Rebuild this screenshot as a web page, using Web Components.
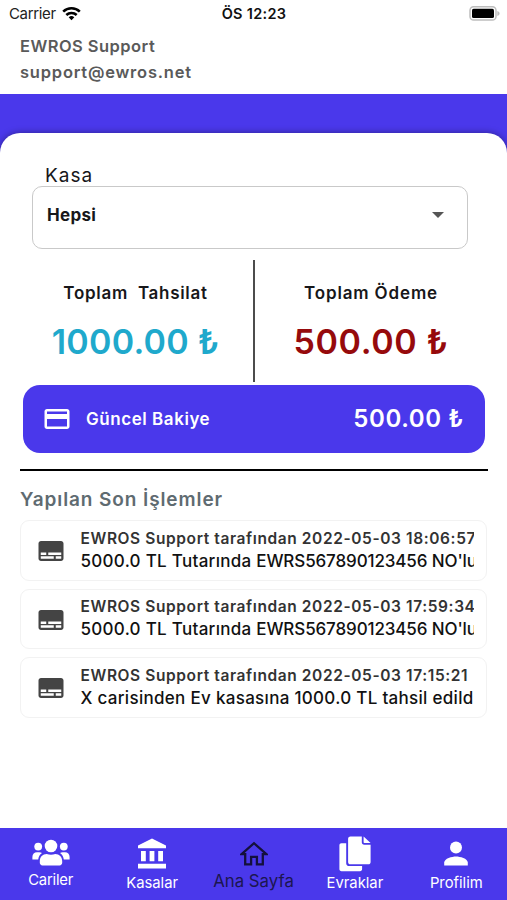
<!DOCTYPE html>
<html lang="tr">
<head>
<meta charset="utf-8">
<title>EWROS</title>
<style>
html, body {
    margin: 0;
    height: 100%;
}

body {
    font-family: Inter, "Noto Sans", sans-serif;
    color: #17171a;
    background-color: white;
    overflow: hidden;
}
</style>
</head>
<body>
<home-page></home-page>

<script>
function define(name, html) {
    const template = document.createElement('template');
    template.innerHTML = html;

    window.customElements.define(name, class extends HTMLElement {
        constructor() {
            super();
            this.attachShadow({mode: 'open'});
            this.shadowRoot.appendChild(template.content.cloneNode(true));
        }
    });
}

define('status-bar', `
<style>
:host {
    display: grid;
    grid-template-columns: 1fr auto 1fr;
    align-items: center;
    height: 28px;
    padding: 0 7px 0 9px;
    font-size: 15px;
    line-height: 28px;
    color: #222;
}

.carrier {
    display: flex;
    align-items: center;
    gap: 6px;
    letter-spacing: -0.35px;
}

.time {
    font-weight: 600;
    font-size: 14.5px;
    letter-spacing: 0.3px;
    margin-left: -1px;
    color: #111;
}

.battery {
    justify-self: end;
}

svg {
    display: block;
    margin-top: -2px;
}
</style>
<div class="carrier">
    <span>Carrier</span>
    <svg width="19" height="15" viewBox="0 0 19 15" fill="none" stroke="#000" stroke-width="2.6">
        <path d="M1.2 5.6a12 12 0 0 1 16.6 0"/>
        <path d="M4.3 9a7.6 7.6 0 0 1 10.4 0"/>
        <path d="M9.5 14.2l-2.8-3a4.2 4.2 0 0 1 5.6 0z" fill="#000" stroke="none"/>
    </svg>
</div>
<span class="time">ÖS 12:23</span>
<svg class="battery" width="31" height="15" viewBox="0 0 31 15">
    <rect x="1" y=".8" width="26" height="13.2" rx="3.6" fill="#fff" stroke="#bdbdbd" stroke-width="1.5"/>
    <rect x="3" y="2.8" width="22" height="9.2" rx="1.6" fill="#000"/>
    <path d="M28.3 5v5c1.5-.4 2.3-1.3 2.3-2.5S29.8 5.4 28.3 5z" fill="#bdbdbd"/>
</svg>
`);

define('user-header', `
<style>
:host {
    display: flex;
    flex-direction: column;
    padding: 5px 0 9px 20px;
    font-size: 16.5px;
    font-weight: 600;
    line-height: 26px;
    color: #5a5a5a;
}

.name {
    letter-spacing: 0.45px;
}

.mail {
    letter-spacing: 0.78px;
}
</style>
<div class="name"><slot name="name"></slot></div>
<div class="mail"><slot name="mail"></slot></div>
`);

define('select-box', `
<style>
:host {
    display: block;
    margin: 0 39px 0 32px;
}

.label {
    padding: 1px 0 0 13px;
    margin-bottom: -1px;
    font-size: 19px;
    line-height: 22px;
    letter-spacing: 1px;
}

.box {
    box-sizing: border-box;
    height: 63px;
    display: flex;
    align-items: center;
    justify-content: space-between;
    border: 1.5px solid #c9c9c9;
    border-radius: 10px;
    padding: 0 23px 6px 14px;
    font-size: 17px;
    font-weight: 700;
    letter-spacing: 0.3px;
}
</style>
<div class="label"><slot name="label"></slot></div>
<div class="box">
    <slot></slot>
    <svg width="12" height="6" viewBox="0 0 12 6"><path d="M0 0h12L6 6z" fill="#555"/></svg>
</div>
`);

define('total-cell', `
<style>
:host {
    display: flex;
    flex-direction: column;
    align-items: center;
    padding-top: 21px;
    white-space: pre;
}

.title {
    font-size: 17px;
    font-weight: 600;
    line-height: 24px;
    letter-spacing: var(--title-spacing, 0.6px);
}

.amount {
    margin-top: 15px;
    font-size: 34px;
    font-weight: 600;
    line-height: 43px;
    letter-spacing: var(--amount-spacing, 0.3px);
    color: var(--amount-color);
}
</style>
<span class="title"><slot name="title"></slot></span>
<span class="amount"><slot></slot></span>
`);

define('balance-card', `
<style>
:host {
    display: flex;
    align-items: center;
    height: 68px;
    box-sizing: border-box;
    margin: 0 22px 0 23px;
    padding: 0 21px 0 19px;
    border-radius: 17px;
    background-color: #4a38eb;
    color: white;
    font-weight: 600;
}

svg {
    flex: none;
}

.title {
    flex: 1;
    margin-left: 14px;
    font-size: 17px;
    letter-spacing: 0.55px;
}

.amount {
    font-size: 24px;
    letter-spacing: 0.6px;
    margin-top: -1px;
}
</style>
<svg width="30" height="30" viewBox="0 0 24 24" fill="#fff"><path d="M20 4H4c-1.11 0-1.99.89-1.99 2L2 18c0 1.11.89 2 2 2h16c1.11 0 2-.89 2-2V6c0-1.11-.89-2-2-2zm0 14H4v-6h16v6zm0-10H4V6h16v2z"/></svg>
<span class="title"><slot name="title"></slot></span>
<span class="amount"><slot></slot></span>
`);

define('activity-row', `
<style>
:host {
    display: flex;
    align-items: center;
    height: 60.5px;
    box-sizing: border-box;
    border: 1.5px solid #f2f2f2;
    border-radius: 9px;
    padding: 0 12px 0 15px;
}

svg {
    flex: none;
    margin-top: 2px;
}

.lines {
    flex: 1;
    min-width: 0;
    margin-left: 14.5px;
    margin-top: -1px;
}

.lines div {
    white-space: nowrap;
    overflow: hidden;
    line-height: 23px;
}

.meta {
    font-size: 15.5px;
    font-weight: 600;
    letter-spacing: 0.6px;
    color: #333;
}

.text {
    font-size: 17px;
    font-weight: 500;
    letter-spacing: var(--text-spacing, -0.12px);
    color: #111;
}
</style>
<svg width="30" height="30" viewBox="0 0 24 24" fill="#444"><path d="M20 4H4c-1.1 0-2 .9-2 2v12c0 1.1.9 2 2 2h16c1.1 0 2-.9 2-2V6c0-1.1-.9-2-2-2zM3.8 13.2h4.4v2H3.8zm10.4 4.9H3.8v-2h10.4zm6 0h-4.4v-2h4.4zm0-2.9H9.8v-2h10.4z"/></svg>
<div class="lines">
    <div class="meta"><slot name="meta"></slot></div>
    <div class="text"><slot></slot></div>
</div>
`);

define('nav-item', `
<style>
:host {
    flex: 1;
    display: flex;
    flex-direction: column;
    align-items: center;
    color: white;
    font-size: 14.8px;
    line-height: 20px;
}

:host([active]) {
    color: #1c1650;
    font-size: 16.8px;
}

.icon {
    height: var(--icon-height, 44.5px);
    display: flex;
    align-items: center;
    padding-top: var(--icon-top, 0);
    box-sizing: border-box;
}

::slotted(svg) {
    display: block;
}
</style>
<div class="icon"><slot name="icon"></slot></div>
<span><slot></slot></span>
`);

define('nav-bar', `
<style>
:host {
    display: flex;
    height: 72px;
    background-color: #4a38eb;
}
</style>
<slot></slot>
`);

define('home-page', `
<style>
:host {
    display: flex;
    flex-direction: column;
    height: 900px;
}

.stage {
    flex: 1;
    display: flex;
    padding-top: 39px;
    background: linear-gradient(#4a38eb 100px, white 100px);
}

.sheet {
    flex: 1;
    min-width: 0;
    box-sizing: border-box;
    padding-top: 31px;
    border-radius: 20px 20px 0 0;
    background-color: white;
    box-shadow: 0 0 7px rgba(0, 0, 0, 0.4);
    clip-path: inset(-20px 0 0 0);
}

.totals {
    display: grid;
    grid-template-columns: 1fr 2px 1fr;
    height: 122px;
    margin: 11px 18px 3px 19px;
}

.divider {
    background-color: #4c4c4c;
}

.income {
    --title-spacing: 0.7px;
    --amount-spacing: 0.25px;
    --amount-color: #1fa9cc;
    margin-right: 1px;
}

.expense {
    --title-spacing: 0.85px;
    --amount-spacing: 0.6px;
    --amount-color: #960a0c;
    margin-left: -2px;
}

.rule {
    height: 2.5px;
    margin: 15.5px 19px 0 20px;
    background-color: #000;
}

h2 {
    margin: 17px 0 9px 20px;
    font-size: 19px;
    font-weight: 600;
    line-height: 23px;
    letter-spacing: 0.9px;
    color: #5f6b71;
}

.list {
    display: flex;
    flex-direction: column;
    gap: 8px;
    margin: 0 20px;
}

.lead {
    letter-spacing: 0.29px;
}
</style>
<status-bar></status-bar>
<user-header>
    <span slot="name">EWROS Support</span>
    <span slot="mail">support@ewros.net</span>
</user-header>
<div class="stage">
    <div class="sheet">
        <select-box><span slot="label">Kasa</span>Hepsi</select-box>
        <div class="totals">
            <total-cell class="income"><span slot="title">Toplam  Tahsilat</span>1000.00 ₺</total-cell>
            <div class="divider"></div>
            <total-cell class="expense"><span slot="title">Toplam Ödeme</span>500.00 ₺</total-cell>
        </div>
        <balance-card><span slot="title">Güncel Bakiye</span>500.00 ₺</balance-card>
        <div class="rule"></div>
        <h2>Yapılan Son İşlemler</h2>
        <div class="list">
            <activity-row>
                <span slot="meta">EWROS Support tarafından 2022-05-03 18:06:57</span><span class="lead">5000.0 TL Tutarında </span>EWRS567890123456 NO'lu
            </activity-row>
            <activity-row>
                <span slot="meta">EWROS Support tarafından 2022-05-03 17:59:34</span><span class="lead">5000.0 TL Tutarında </span>EWRS567890123456 NO'lu
            </activity-row>
            <activity-row style="--text-spacing: 0.3px">
                <span slot="meta">EWROS Support tarafından 2022-05-03 17:15:21</span>X carisinden Ev kasasına 1000.0 TL tahsil edildi
            </activity-row>
        </div>
    </div>
</div>
<nav-bar>
    <nav-item style="--icon-height: 42px; --icon-top: 7px; letter-spacing: -0.2px">
        <svg slot="icon" width="38" height="28" viewBox="0 0 38 28" fill="#fff">
            <circle cx="6.2" cy="7.6" r="3.9"/>
            <circle cx="31.8" cy="7.6" r="3.9"/>
            <circle cx="19" cy="7" r="6.3"/>
            <path d="M.4 20.5v-2.6c0-2.8 1.9-4.7 4.6-4.7h2.2c1.1 0 2 .3 2.8.8-2.3 1.6-3.4 3.7-3.8 6.5z"/>
            <path d="M37.6 20.5v-2.6c0-2.8-1.9-4.7-4.6-4.7h-2.2c-1.1 0-2 .3-2.8.8 2.3 1.6 3.4 3.7 3.8 6.5z"/>
            <path d="M7.8 23.8v-1.6c0-4.2 2.9-7.2 6.9-7.2 1.5.6 2.8.8 4.3.8s2.8-.2 4.3-.8c4 0 6.9 3 6.9 7.2v1.6c0 1.5-1.1 2.6-2.6 2.6H10.4c-1.5 0-2.6-1.1-2.6-2.6z"/>
        </svg>Cariler
    </nav-item>
    <nav-item style="--icon-top: 6px">
        <svg slot="icon" width="28" height="31" viewBox="0 0 28 31" fill="#fff">
            <path d="M0 10.2V7.6L14 .4l14 7.2v2.6zM3 13h4.8v10.2H3zm8.6 0h4.8v10.2h-4.8zm8.6 0H25v10.2h-4.8zM0 25.8h28v4.8H0z"/>
        </svg>Kasalar
    </nav-item>
    <nav-item active style="--icon-height: 43px; --icon-top: 8px">
        <svg slot="icon" width="28" height="25" viewBox="0 0 28 25" fill="none" stroke="#14103c" stroke-width="2.3">
            <path d="M1.6 13.2L14 2.2l12.4 11h-3.6v10.2h-5.9v-7.6h-5.8v7.6H5.2V13.2z"/>
        </svg>Ana Sayfa
    </nav-item>
    <nav-item style="--icon-top: 7px">
        <svg slot="icon" width="32" height="36" viewBox="0 0 32 36" fill="#fff">
            <path d="M2.5 7.2h4.7v20c0 1.7 1.2 2.9 2.9 2.9h13v3c0 1.3-.8 2.1-2.1 2.1H2.5C1.2 35.2.4 34.4.4 33.1V9.3c0-1.3.8-2.1 2.1-2.1z"/>
            <path d="M11.4.6h11.4v5.6c0 1.6.9 2.5 2.5 2.5h6.3v17.2c0 1.4-.9 2.3-2.3 2.3H11.4c-1.4 0-2.3-.9-2.3-2.3v-23C9.1 1.5 10 .6 11.4.6z"/>
            <path d="M24.6.6l7 6.5h-6.2c-.6 0-.8-.3-.8-.8z"/>
        </svg>Evraklar
    </nav-item>
    <nav-item style="--icon-top: 7px">
        <svg slot="icon" width="24" height="25" viewBox="0 0 24 25" fill="#fff">
            <circle cx="12" cy="6.6" r="6"/>
            <path d="M.2 24.6v-3c0-4.1 7.9-6.1 11.8-6.1s11.8 2 11.8 6.1v3z"/>
        </svg>Profilim
    </nav-item>
</nav-bar>
`);
</script>
</body>
</html>
